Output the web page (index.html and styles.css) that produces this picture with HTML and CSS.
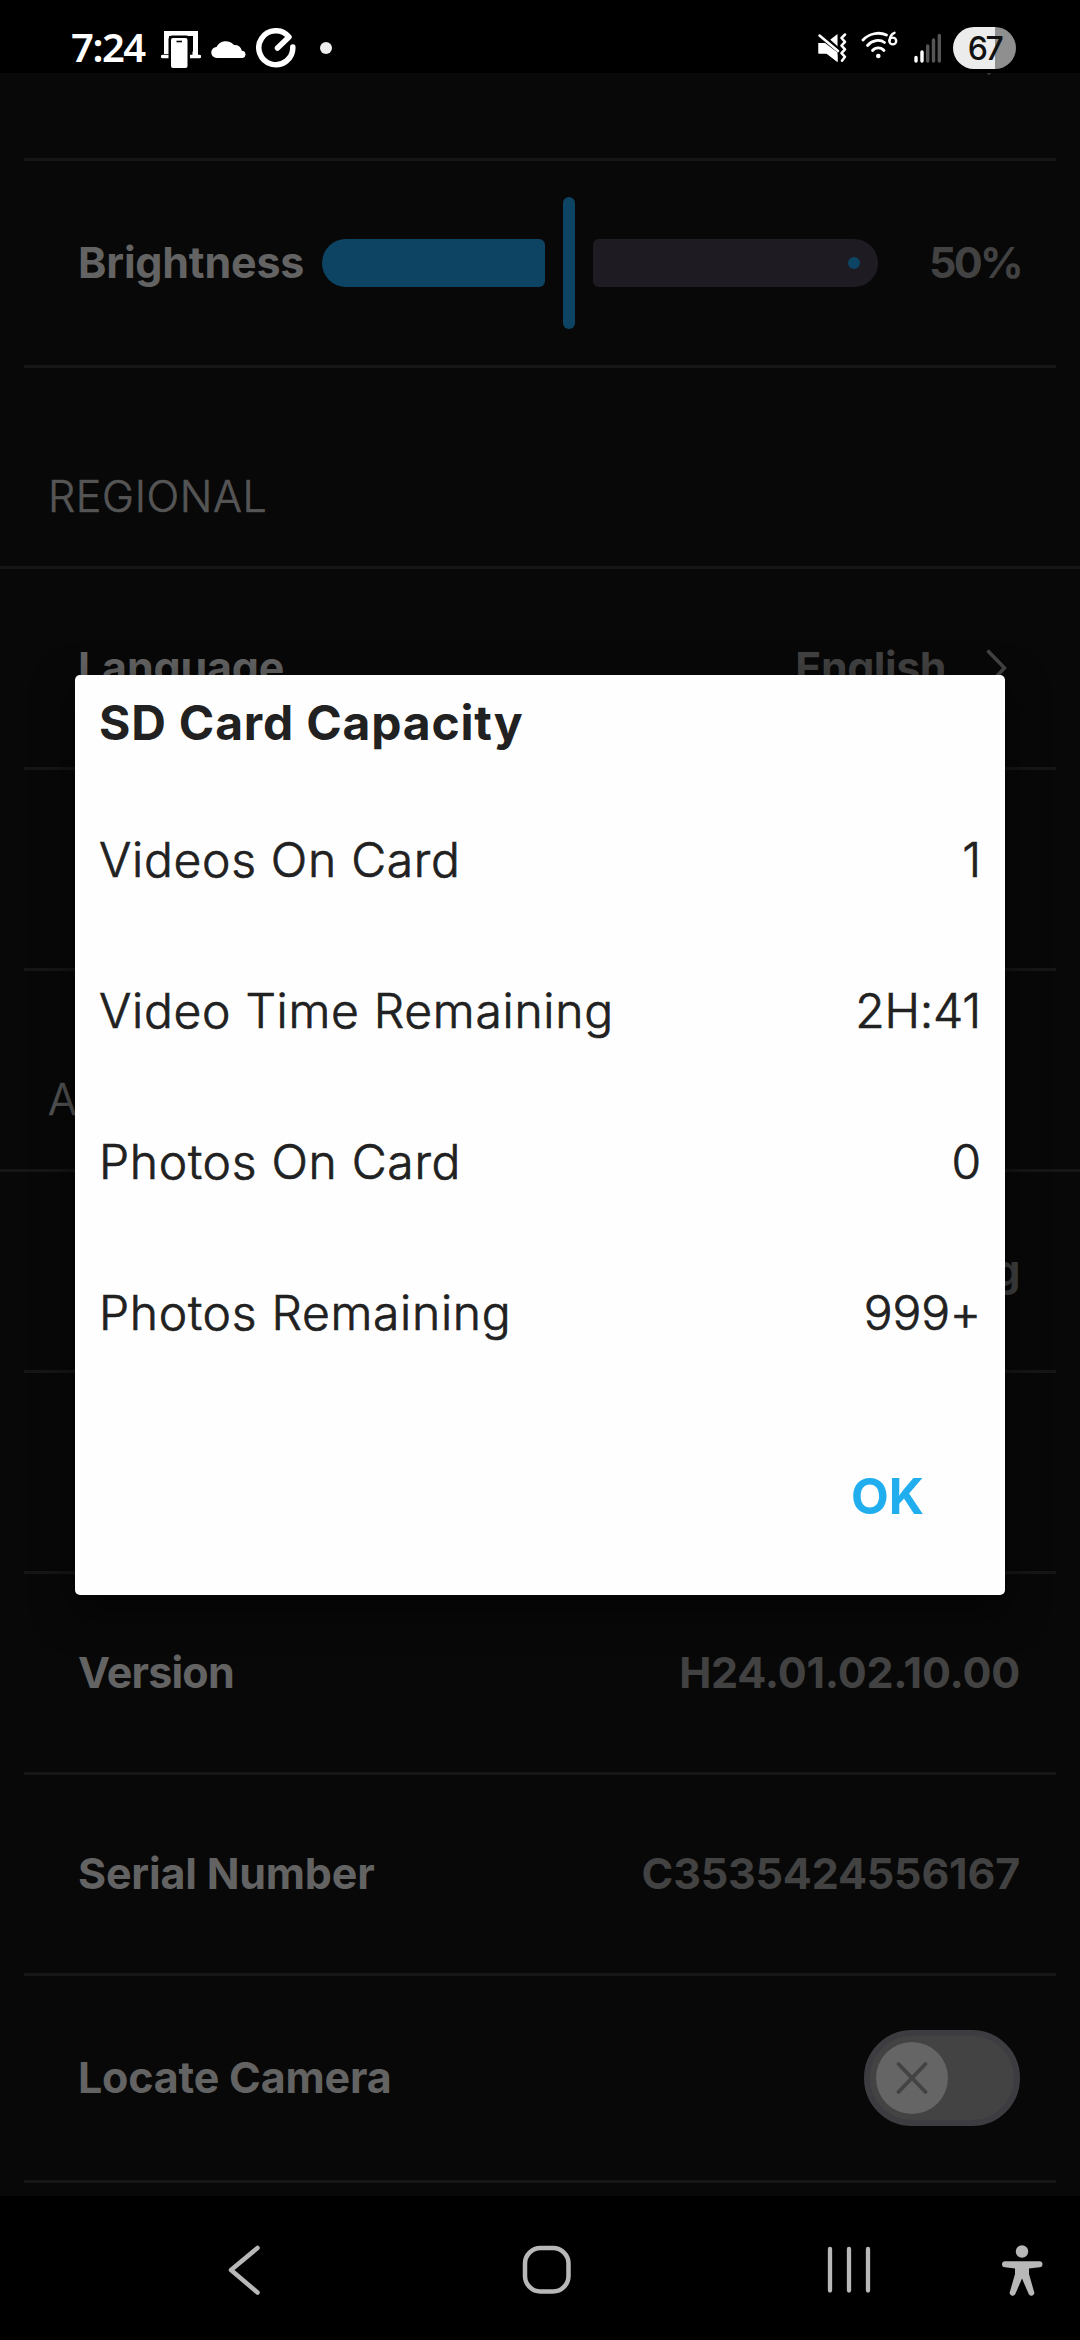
FILE: index.html
```
<!DOCTYPE html>
<html lang="en">
<head>
<meta charset="utf-8">
<title>Camera settings</title>
<link rel="stylesheet" href="styles.css">
</head>
<body>
<div class="screen">
  <header class="status">
    <div class="status-left">
      <span class="clock">7:24</span>
      <svg class="i-link" width="40" height="40" viewBox="0 0 40 40"><path d="M5.500 24V3.500h29V24h-3" fill="none" stroke="#fff" stroke-width="5"/><path d="M1.500 26.500h37" stroke="#fff" stroke-width="3.500" stroke-linecap="round"/><rect x="7.500" y="5.500" width="21.500" height="34" rx="4" fill="#000"/><rect x="10" y="8" width="16.500" height="30" rx="2" fill="#fff"/><path d="M15.500 11.500h5.500" stroke="#000" stroke-width="1.600"/></svg>
      <svg class="i-cloud" width="36" height="22" viewBox="0 0 36 22"><path d="M6 21a5.500 5.500 0 0 1-.5-11A10.500 10.500 0 0 1 23 8a7 7 0 0 1 7.800 5.800A3.700 3.700 0 0 1 32 21z" fill="#fff"/></svg>
      <svg class="i-gauge" width="40" height="40" viewBox="0 0 40 40"><path d="M21.500 20L33 9A17 17 0 1 0 36.800 19" fill="none" stroke="#fff" stroke-width="5.500" stroke-linecap="round" stroke-linejoin="round"/></svg>
      <i class="more-dot"></i>
    </div>
    <div class="status-right">
      <svg width="30" height="30" viewBox="0 0 30 30"><path d="M1.500 10H9L20.500 1V29L9.500 20.500H1.500z" fill="#fff"/><path d="M1 1L22 20" stroke="#000" stroke-width="8"/><path d="M1.500 10H8L20.500 19.500V29L9.500 20.500H1.500z" fill="#fff"/><path d="M2.500 2.500L21 18" stroke="#fff" stroke-width="2.500" stroke-linecap="round"/><path d="M28 1.500l-3.500 3.500 3.500 3.800-3.500 3.800 3.500 3.800-3.500 3.800 3.500 3.600-3 4" fill="none" stroke="#fff" stroke-width="2.500" stroke-linecap="round" stroke-linejoin="round"/></svg>
      <svg class="i-wifi" width="38" height="30" viewBox="0 0 38 30"><g fill="none" stroke="#fff" stroke-width="2.800" stroke-linecap="round"><path d="M2 9C8 2.500 18 .5 25.500 4"/><path d="M6.500 14.500C11 9 19 8 23.500 11.500"/><path d="M11.500 19.500c3-3.500 8.500-3.500 11.500 0"/><circle cx="31.800" cy="10" r="3.400" stroke-width="2.400"/><path d="M28.500 9.500C28.800 6 30.500 3 33.500 1.800" stroke-width="2.400"/></g><circle cx="17.300" cy="25" r="2.300" fill="#fff"/></svg>
      <svg class="i-signal" width="28" height="30" viewBox="0 0 28 30"><g stroke-width="3.400" stroke-linecap="round"><path d="M2 24.500V28M8 19V28" stroke="#fff"/><path d="M13.700 13V28M19.500 7V28M25.300 2.500V28" stroke="#555"/></g></svg>
      <span class="battery">67</span>
    </div>
  </header>

  <main class="settings">
    <div class="row row-hidden"><i class="tail"></i></div>
    <div class="row row-tall">
      <span class="label">Brightness</span>
      <div class="slider">
        <div class="track-on"></div>
        <div class="thumb"></div>
        <div class="track-off"><i></i></div>
      </div>
      <span class="value percent">50%</span>
    </div>
    <h2 class="section">REGIONAL</h2>
    <div class="row">
      <span class="label">Language</span>
      <span class="value push">English</span>
      <svg class="chevron" width="22" height="40" viewBox="0 0 22 40"><path d="M2.500 2.500L19.500 20L2.500 37.500" fill="none" stroke="#434343" stroke-width="3.500"/></svg>
    </div>
    <div class="row"></div>
    <h2 class="section">A</h2>
    <div class="row"><span class="value push">g</span></div>
    <div class="row"></div>
    <div class="row">
      <span class="label version-label">Version</span>
      <span class="value version push">H24.01.02.10.00</span>
    </div>
    <div class="row">
      <span class="label">Serial Number</span>
      <span class="value serial push">C3535424556167</span>
    </div>
    <div class="row row-tall">
      <span class="label">Locate Camera</span>
      <div class="switch push"><div class="knob"><svg width="32" height="34" viewBox="0 0 32 34"><path d="M2.500 3L29.500 31M29.500 3L2.500 31" stroke="#434343" stroke-width="3.800" stroke-linecap="round"/></svg></div></div>
    </div>
  </main>

  <nav class="navbar">
    <svg width="32" height="50" viewBox="0 0 32 50"><path d="M29.500 3L3 25L29.500 47.500" fill="none" stroke="#b8b8b8" stroke-width="4.500" stroke-linecap="round" stroke-linejoin="round"/></svg>
    <svg width="50" height="50" viewBox="0 0 50 50"><rect x="3" y="3" width="43.500" height="43.500" rx="15.500" fill="none" stroke="#b8b8b8" stroke-width="4.500"/></svg>
    <svg width="44" height="50" viewBox="0 0 44 50"><path d="M3 4V45.500M22 4V45.500M41 4V45.500" stroke="#b8b8b8" stroke-width="4.300" stroke-linecap="round"/></svg>
    <svg width="42" height="52" viewBox="0 0 42 52"><circle cx="21" cy="7.500" r="6.200" fill="#b8b8b8"/><path d="M4 17.200H38.500a3 3 0 0 1 0 6L28 24.600V30L33 47.500a2.800 2.800 0 0 1-5.300 2.500L21 34.500 14.300 50A2.800 2.800 0 0 1 9 47.500L14 30V24.600L4 23.200a3 3 0 0 1 0-6z" fill="#b8b8b8"/></svg>
  </nav>

  <section class="dialog">
    <h1 class="title">SD Card Capacity</h1>
    <div class="stat"><span>Videos On Card</span><b>1</b></div>
    <div class="stat"><span>Video Time Remaining</span><b>2H:41</b></div>
    <div class="stat"><span>Photos On Card</span><b>0</b></div>
    <div class="stat"><span>Photos Remaining</span><b>999+</b></div>
    <button class="ok">OK</button>
  </section>
</div>
</body>
</html>
```
FILE: styles.css
```
* { box-sizing: border-box; margin: 0; padding: 0; }
body { background: #000; font-family: Inter, "Open Sans", sans-serif; }
.screen { position: relative; width: 1080px; height: 2340px; display: flex; flex-direction: column; overflow: hidden; }
svg { display: block; flex: none; }

/* status bar */
.status { height: 73px; flex: none; display: flex; justify-content: space-between; padding: 23px 64px 0 71px; }
.status-left, .status-right { display: flex; align-items: center; height: 50px; }
.clock { width: 90px; color: #fff; font: 600 40px/48px "Noto Sans", sans-serif; letter-spacing: -1.500px; white-space: nowrap; padding-bottom: 2px; }
.i-link { margin-top: 4px; }
.i-cloud { margin: 0 9px 0 10px; }
.more-dot { width: 12px; height: 12px; border-radius: 6px; background: #eee; margin-left: 24px; }
.i-wifi { margin-left: 14px; margin-top: -4px; }
.i-signal { margin-left: 15px; }
.battery { width: 63px; height: 42px; margin-left: 11px; border-radius: 21px; text-align: center; color: #111; font: 500 32px/43px Inter, sans-serif; letter-spacing: -2.500px; background: linear-gradient(90deg, #ececec 42px, #8f8f8f 42px); }

/* settings list behind the dialog */
.settings { flex: 1; background: #080808; }
.row { height: 201px; margin: 0 24px; padding: 0 36px 0 54px; border-bottom: 3px solid #161616; display: flex; align-items: center; }
.row-tall { height: 207px; }
.row-hidden { height: 88px; align-items: flex-start; }
.tail { width: 4px; height: 2px; margin-left: 909px; background: #333; border-radius: 0 0 2px 2px; }
.label, .value { font-weight: 700; font-size: 43px; line-height: 60px; padding-bottom: 3px; white-space: nowrap; }
.label { color: #636363; letter-spacing: -0.2px; }
.version-label { letter-spacing: -0.8px; }
.value { color: #424242; letter-spacing: -0.5px; }
.version, .serial { letter-spacing: -0.2px; }
.percent { width: 91px; letter-spacing: -2.700px; }
.push { margin-left: auto; }
.chevron { margin: 0 13px 0 39px; }
.section { height: 201px; padding: 97.500px 48px 0; font-weight: 300; font-size: 43px; line-height: 60px; letter-spacing: .6px; color: #555; -webkit-text-stroke: .6px #555; border-bottom: 3px solid #161616; }

.slider { width: 556px; height: 132px; margin-left: auto; margin-right: 51px; display: flex; align-items: center; }
.track-on { width: 223px; height: 48px; background: #0d4463; border-radius: 24px 6px 6px 24px; }
.thumb { width: 12px; height: 132px; margin: 0 18px; background: #0d4463; border-radius: 6px; }
.track-off { flex: 1; height: 48px; background: #1e1c22; border-radius: 6px 24px 24px 6px; display: flex; align-items: center; justify-content: flex-end; padding-right: 18px; }
.track-off i { width: 12px; height: 12px; border-radius: 6px; background: #0d4463; }

.switch { width: 156px; height: 96px; border-radius: 48px; border: 6px solid #3d3c40; background: #434343; display: flex; align-items: center; padding-left: 6px; }
.knob { width: 72px; height: 72px; border-radius: 36px; background: #656565; display: flex; align-items: center; justify-content: center; }

/* system navigation */
.navbar { height: 144px; flex: none; display: grid; grid-template-columns: 293.500px 305.500px 173.500px 1fr; align-items: center; padding: 4px 0 0 228px; }

/* capacity dialog */
.dialog { position: absolute; left: 75px; top: 675px; width: 930px; height: 920px; padding: 12px 24px; background: #fefefe; border-radius: 5px; box-shadow: 0 14px 40px rgba(0, 0, 0, .6); color: #212121; display: flex; flex-direction: column; }
.title { font-size: 48px; line-height: 71px; font-weight: 700; letter-spacing: .8px; margin-bottom: 26px; }
.stat { height: 151px; display: flex; align-items: center; justify-content: space-between; font-size: 48px; font-weight: 300; letter-spacing: .7px; -webkit-text-stroke: .7px #212121; }
.stat b { font-weight: 300; letter-spacing: -0.2px; }
.ok { align-self: flex-end; margin: 68px 57px 0 0; border: 0; background: none; color: #21aeef; font: 700 49px/82px Inter, sans-serif; }
```
